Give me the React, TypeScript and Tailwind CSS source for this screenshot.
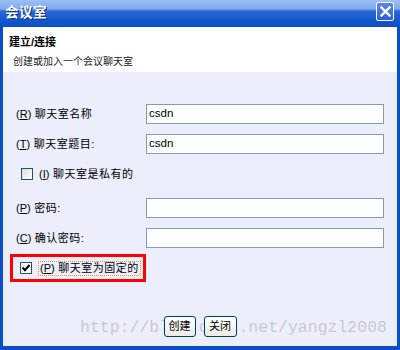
import React from "react";

const font = { fontFamily: '"Liberation Sans", "Noto Sans CJK SC", sans-serif' };

function Field({ label, value }: { label: React.ReactNode; value?: string }) {
  return (
    <div className="flex items-center h-5">
      <div className="w-[130px] text-[11px] text-black leading-none tracking-[0.5px]">{label}</div>
      <div className="w-[238px] h-5 border border-[#7f9db9] bg-white flex items-center pl-[2px] text-[11.5px] text-black">
        {value}
      </div>
    </div>
  );
}

function Mn({ k }: { k: string }) {
  return (
    <span className="tracking-normal">
      (<span className="underline">{k}</span>)
    </span>
  );
}

export default function App() {
  return (
    <div className="relative w-[400px] h-[350px] flex flex-col bg-[#0a4ec6] select-none" style={font}>
      {/* Watermark (sits under the dialog buttons) */}
      <div
        className="absolute left-[80px] top-[318px] z-10 text-[16.5px] leading-[20px] text-[rgba(150,150,150,0.45)] pointer-events-none whitespace-nowrap"
        style={{ fontFamily: '"Liberation Mono", monospace' }}
      >
        http://blog.csdn.net/yangzl2008
      </div>
      {/* Title bar */}
      <div className="h-[27px] flex items-center justify-between pl-[5px] pr-[6px] bg-[linear-gradient(to_bottom,#9cc0f4_0px,#7ea9ec_9px,#2d69d6_11px,#1558cc_20px,#0b4ec6_27px)]">
        <span className="text-white text-[13.5px] font-bold tracking-[0.5px] [text-shadow:1px_1px_0_#0a2a80]">会议室</span>
        <div className="w-[18px] h-[19px] mt-[-4px] rounded-[2px] border border-white bg-[linear-gradient(to_bottom,#5a86ea,#2f5fd8)] flex items-center justify-center">
          <svg width="11" height="11" viewBox="0 0 11 11">
            <path d="M1.5 1.5 L9.5 9.5 M9.5 1.5 L1.5 9.5" stroke="white" strokeWidth="2.4" strokeLinecap="square" />
          </svg>
        </div>
      </div>
      {/* Content */}
      <div className="flex-1 flex flex-col mx-[3px] mb-[4px]">
        <div className="h-[45px] bg-white flex flex-col pl-[6px]">
          <div className="mt-[8px] text-[11px] font-bold text-black leading-[14px]">建立/连接</div>
          <div className="mt-[7px] ml-[4px] text-[10px] text-[#222] leading-[12px]">创建或加入一个会议聊天室</div>
        </div>
        <div className="flex-1 bg-[#eceefc] flex flex-col pl-[13px] pt-[32px]">
          <Field label={<><Mn k="R" /> 聊天室名称</>} value="csdn" />
          <div className="mt-[10px]">
            <Field label={<><Mn k="T" /> 聊天室题目:</>} value="csdn" />
          </div>
          <div className="mt-[10px] h-5 flex items-center pl-[5px]">
            <div className="w-[12px] h-[12px] border border-[#1c5180] bg-[linear-gradient(135deg,#dcdcd7,#ffffff)]" />
            <span className="ml-[6px] text-[11px] text-black tracking-[0.5px]"><Mn k="I" /> 聊天室是私有的</span>
          </div>
          <div className="mt-[14px]">
            <Field label={<><Mn k="P" /> 密码:</>} />
          </div>
          <div className="mt-[10px]">
            <Field label={<><Mn k="C" /> 确认密码:</>} />
          </div>
          <div className="mt-[6px] ml-[-6px] w-[136px] h-[28px] border-[3px] border-[#ff0000] flex items-center pl-[7px]">
            <div className="w-[12px] h-[12px] border border-[#1c5180] bg-white flex items-center justify-center">
              <svg width="10" height="10" viewBox="0 0 10 10">
                <path d="M1.5 4.5 L4 7.2 L8.5 2" fill="none" stroke="black" strokeWidth="2.2" />
              </svg>
            </div>
            <span className="ml-[6px] px-[1px] text-[11px] text-black border border-dotted border-[#e8a000] leading-[13px] tracking-[0.5px]">
              <Mn k="P" /> 聊天室为固定的
            </span>
          </div>
          <div className="relative z-20 mt-[34px] flex justify-center gap-[8px] pr-[13px]">
            <button className="w-[32px] h-[21px] rounded-[3px] border border-[#003c74] bg-[linear-gradient(to_bottom,#ffffff,#ecebe6)] text-[11px] text-black leading-none">创建</button>
            <button className="w-[33px] h-[21px] rounded-[3px] border border-[#003c74] bg-[linear-gradient(to_bottom,#ffffff,#ecebe6)] text-[11px] text-black leading-none">关闭</button>
          </div>
        </div>
      </div>
    </div>
  );
}
